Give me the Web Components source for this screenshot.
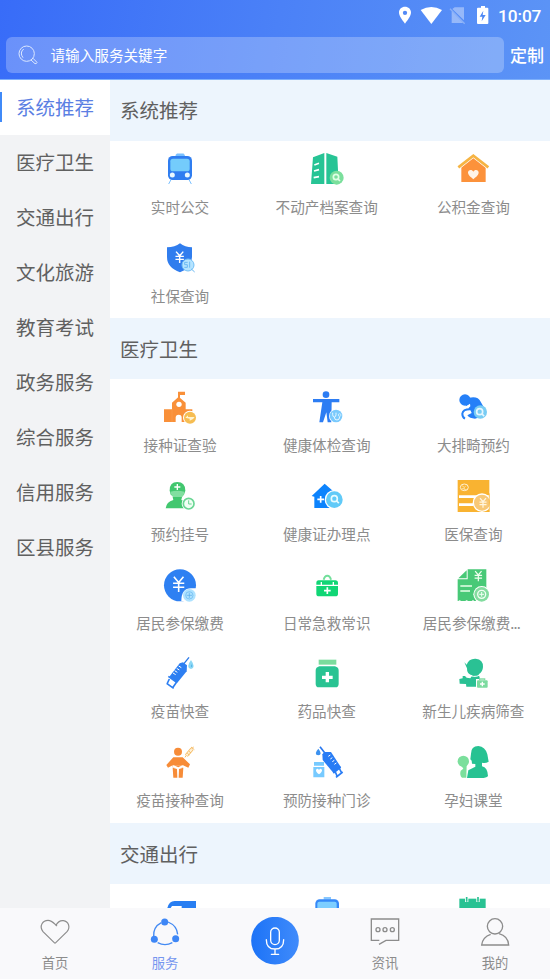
<!DOCTYPE html>
<html lang="zh-CN">
<head>
<meta charset="utf-8">
<title>服务</title>
<style>
html,body{margin:0;height:100%}
body{font-family:"Noto Sans CJK SC","Noto Sans",sans-serif;background:#fff;overflow:hidden}
</style>
</head>
<body>
<service-app></service-app>
<script>
const yen = (x, y, s, c, w = 2) => `<path transform="translate(${x} ${y}) scale(${s})" d="M-6-9 0-2 6-9M0-2V10M-7-1H7M-7 4H7" fill="none" stroke="${c}" stroke-width="${w}"/>`;
const mag = (x, y, r, c, w) => `<circle cx="${x}" cy="${y}" r="${r}" fill="none" stroke="${c}" stroke-width="${w}"/><path d="M${x + r * .7} ${y + r * .7}l${r * .8} ${r * .8}" stroke="${c}" stroke-width="${w}"/>`;
const ICONS = {
  train: ['162 39 96 96', `<path d="M201 42h19q3 0 3 6h-25q0-6 3-6zM183 119l-7 13M237 119l7 13" fill="#79c0ff" stroke="#79c0ff" stroke-width="3"/><rect x="174" y="48" width="72" height="72" rx="14" fill="#2f7df0"/><rect x="181" y="56" width="58" height="38" rx="8" fill="#74ccfb"/><circle cx="187" cy="105" r="7.5" fill="#e9f8ff"/><circle cx="232" cy="105" r="7.5" fill="#e9f8ff"/>`],
  building: ['602 39 96 96', `<path d="M608 52 642 39V132H602ZM648 39 681 50 685 132H648Z" fill="#27c495"/><path d="M612 75l14-5M611 93l15-4M610 113l16-3" stroke="#fff" stroke-width="5"/><circle cx="679" cy="113" r="21" fill="#7bdf9c"/>${mag(677, 111, 8, '#e0ffe5', 5)}`],
  house: ['382 39 96 96', `<path d="M395 81 431 52 468 81V126H395Z" fill="#fc923b"/><path d="M386 82 431 47 476 82" fill="none" stroke="#fff" stroke-width="12"/><path d="M386 82 431 47 476 82" fill="none" stroke="#f6b443" stroke-width="8"/><path d="M431 118C425 112 416 107 415 99c-1-10 12-12 16-4 4-8 17-6 16 4-1 8-10 13-16 19z" fill="#fff4e7"/>`],
  shield: ['162 305 96 96', `<path d="M210 309Q225 321 246 321V350Q246 382 210 396Q171 382 171 350V321Q195 321 210 309Z" fill="#307dee"/>${yen(209, 350, 1.8, '#fff', 2.4)}<circle cx="234" cy="374" r="18" fill="#b5e4ff" stroke="#74c0f6" stroke-width="3"/><path d="M244 386l10 9M233 366h-9v7h8v8h-9M239 364v18" fill="none" stroke="#6bb9f2" stroke-width="3"/>`],
  school: ['162 34 96 96', `<path d="M162 89H186V69L206 51 227 69V89H247V127H162ZM204 36H225V46H210V55H204Z" fill="#f99039"/><circle cx="207" cy="74" r="8" fill="#fff"/><path d="M197 128v-14q0-9 9-9t9 9v14z" fill="#fff"/><path d="M186 88v39" stroke="#ffab63"/><circle cx="240" cy="114" r="21" fill="#fff"/><circle cx="240" cy="114" r="18" fill="#f6bd52"/><path d="M226 114l8-7v5h20q-4 9-15 11v-6z" fill="#fff3d0"/>`],
  exam: ['602 34 96 96', `<circle cx="647" cy="45" r="10" fill="#2d7df3"/><path d="M608 58H687V68H664L663 128H652L648 98 638 128H627L636 68H608Z" fill="#2d7df3"/><circle cx="677" cy="109" r="21" fill="#fff"/><circle cx="677" cy="109" r="19" fill="#7acafd"/><path d="M667 99v6q0 7 5 7t5-7v-6M672 112q0 9 8 9t8-10" fill="none" stroke="#e6f7ff" stroke-width="3"/><circle cx="688" cy="106" r="4" fill="none" stroke="#e6f7ff" stroke-width="2"/>`],
  fetus: ['382 34 96 96', `<circle cx="406" cy="61" r="17" fill="#2580f8"/><path d="M417 55Q444 48 453 66L462 82 458 110 436 117Q420 117 413 107L426 100 422 91 416 86 422 80 421 72 408 80Z" fill="#2580f8"/><path d="M424 89Q400 88 398 102 398 113 406 117" stroke="#2580f8" stroke-width="6" fill="none"/><circle cx="452" cy="97" r="20" fill="#78ccf4"/>${mag(450, 96, 9, '#e6f7ff', 5)}`],
  nurse: ['162 300 96 96', `<path d="M179 332Q178 306 202 306T226 332L222 344Q202 360 182 344Z" fill="#42c76f"/><path d="M181 335Q202 329 223 335Q222 355 202 356 184 353 181 335Z" fill="#82dfa0"/><path d="M167 385Q169 366 190 360L188 351H216L214 360Q238 365 238 385Z" fill="#42c76f"/><path d="M202 312v18M193 321h18" stroke="#fff" stroke-width="4"/><circle cx="236" cy="371" r="21" fill="#fff"/><circle cx="236" cy="371" r="16" fill="#f1fff4" stroke="#6bd695" stroke-width="5"/><path d="M236 361v11h9" fill="none" stroke="#6bd695" stroke-width="3"/>`],
  clinic: ['602 300 96 96', `<path d="M604 348 643 311 668 333 691 352 680 357 676 384H612V350Z" fill="#0c83fd"/><path d="M631 348v20M621 358h20" stroke="#fff" stroke-width="5"/><circle cx="672" cy="359" r="29" fill="#fff"/><circle cx="672" cy="359" r="25" fill="#61caf8"/>${mag(672, 356, 9, '#e6fbff', 5)}`],
  card: ['382 300 96 96', `<path d="M384 300H479V396H384Z" fill="#f9b331"/><ellipse cx="404" cy="322" rx="12" ry="10" fill="none" stroke="#fff0d0" stroke-width="3"/><path d="M397 317l7 5 5-5M404 322v7h7M396 326h7" fill="none" stroke="#fff0d0" stroke-width="2"/><path d="M388 350H479M388 374H431" stroke="#fff" stroke-width="8"/><circle cx="457" cy="368" r="28" fill="#fff"/><circle cx="457" cy="368" r="24" fill="#f8c877"/><path d="M479 340v56" stroke="#f9b331" stroke-width="2"/>${yen(460, 368, 1.5, '#fff6e0', 2.5)}`],
  pay: ['162 56 96 96', `<circle cx="210" cy="105" r="48" fill="#2e80f2"/>${yen(206, 101, 2.4, '#fff', 2)}<path d="M214 153q0-39 29-39h17v39z" fill="#fff"/><circle cx="238" cy="135" r="19" fill="#aee2ff"/><circle cx="238" cy="135" r="11" fill="none" stroke="#63b5ef" stroke-width="2"/><path d="M238 127v16M230 135h16" stroke="#56abe9" stroke-width="2"/>`],
  kit: ['602 56 96 96', `<path d="M640 88Q643 76 651 76T662 88" fill="none" stroke="#72df9b" stroke-width="6"/><path d="M618 103V98Q618 90 625 90H675Q683 90 683 98V103ZM618 107H683V131Q683 138 675 138H626Q618 138 618 131Z" fill="#10d675"/><path d="M633 95v9M669 95v9" stroke="#fff" stroke-width="4"/><path d="M651 111v20M641 121h20" stroke="#fff" stroke-width="5"/>`],
  bill: ['382 56 96 96', `<path d="M414 57H470V152H384V87H414Z" fill="#48c977"/><path d="M386 84 411 60V84Z" fill="#48c977"/>${yen(446, 77, 1.6, '#efffee', 2.3)}<path d="M392 107h35M392 122h29" stroke="#e6ffe9" stroke-width="4"/><path d="M385 154q5-8 10 0m11 0q5-8 10 0m9 0q5-8 10 0" fill="#fff"/><circle cx="456" cy="132" r="25" fill="#fff"/><circle cx="456" cy="132" r="22" fill="#83dc9f"/><circle cx="456" cy="132" r="12" fill="none" stroke="#f0fff2" stroke-width="4"/><path d="M456 125v14M449 132h14" stroke="#f0fff2" stroke-width="3"/>`],
  syringe: ['162 322 96 96', `<path d="M220 344 237 323" stroke="#2878e9" stroke-width="4"/><path d="M209 341 219 338 231 347 230 365 202 399 178 381Z" fill="#2d7ff2"/><path d="M206 349l8 5M200 356l8 5M194 363l8 5M189 370l8 5" stroke="#fff" stroke-width="3"/><path d="M175 380l26 19M170 401l21 15M178 388l-7 15M200 397l-12 17" stroke="#2d7ff2" stroke-width="5" fill="none"/><path d="M243 331Q226 354 243 358 259 354 243 331Z" fill="#8ad7f5"/><path d="M245 345v7" stroke="#4fb0e6" stroke-width="3"/>`],
  medicine: ['602 322 96 96', `<path d="M625 330H678V345H625Z" fill="#7bdc9d"/><path d="M627 350H674Q685 353 685 363V402Q685 413 675 413H626Q616 413 616 402V363Q616 353 627 350Z" fill="#29c392"/><path d="M651 367v31M635 383h32" stroke="#fff" stroke-width="10"/>`],
  newborn: ['382 322 96 96', `<path d="M404 338 411 345Q417 326 438 327 461 329 460 352 459 368 447 374L451 387V411H410L409 403 390 402 389 388 399 386 399 379 406 379 411 384 422 386 428 377Q411 374 412 356Z" fill="#2ac194"/><path d="M414 373Q432 386 451 376" stroke="#fff" stroke-width="3" fill="none"/><path d="M439 388H476V416H439Z" fill="#fff"/><path d="M450 392v-4h15v4" fill="none" stroke="#85dda7" stroke-width="4"/><rect x="442" y="392" width="32" height="22" rx="3" fill="#7ddba0"/><path d="M458 396v14M451 403h14" stroke="#fff" stroke-width="4"/>`],
  child: ['162 48 96 96', `<circle cx="204" cy="65" r="12" fill="#f78c38"/><path d="M190 82H218L240 103 235 113 219 106V112H188V106L174 113 169 105ZM188 113L201 117 202 143H190ZM220 113L207 117 206 143H218Z" fill="#f78c38"/><path d="M188 110Q204 119 220 110L219 106H189Z" fill="#fff"/><path d="M191 106H217L205 112Z" fill="#f78c38"/><path d="M229 77 246 57" stroke="#f5ba62" stroke-width="11"/><path d="M229 77 246 57" stroke="#fff2d8" stroke-width="6"/><path d="M232 70l6 5M237 64l6 5M225 82l4-6M245 56l6-5M243 51l10 8" stroke="#f5ba62" stroke-width="3"/>`],
  vaccine: ['602 48 96 96', `<path d="M624 56Q608 74 624 76 638 73 624 56Z" fill="#3b91ef"/><path d="M629 50 643 68" stroke="#2877ef" stroke-width="5"/><path d="M636 73 642 66 662 66 692 112 670 130 637 90Z" fill="#287cf5"/><path d="M654 79l6-4M660 87l6-4M666 95l6-4M672 103l6-4" stroke="#fff" stroke-width="3"/><path d="M669 129 691 111M677 142 697 126M675 126l6 14M687 115l7 14" stroke="#287cf5" stroke-width="5"/><path d="M611 96H641V107H611ZM609 111H642V142H609Z" fill="#77caff"/><path d="M626 133q-10-7-9-13 4-7 9 0 5-7 9 0 1 6-9 13z" fill="#fff"/>`],
  mother: ['382 48 96 96', `<circle cx="401" cy="94" r="17" fill="#7bdf9c"/><path d="M394 106H411L410 143H397Q389 136 393 122L401 116Z" fill="#7bdf9c"/><path d="M422 88 424 71Q424 48 446 48 467 50 473 73L477 95Q467 101 457 98V109Q474 113 475 138 470 144 455 144H412L416 121 437 110V102L427 101 426 92Z" fill="#27c292"/>`],
  car: ['492 18 96 96', `<path d="M502 54Q507 33 524 33H588V54H545V48H516L512 54Z" fill="#287ef2"/>`],
  bus: ['107 21 96 96', `<path d="M145 24H167V32H145Z" fill="#87c7ff"/><rect x="120" y="31" width="71" height="70" rx="13" fill="#3488f8"/><rect x="126" y="38" width="58" height="38" rx="6" fill="#7dceff"/>`],
  calendar: ['547 21 96 96', `<path d="M554 29H633V106H554Z" fill="#29c293"/><path d="M576 24v15M610 24v15" stroke="#fff" stroke-width="10"/><path d="M576 24v14M610 24v14" stroke="#29c293" stroke-width="5"/>`]
};
const define = (name, html) => customElements.define(name, class extends HTMLElement {
  connectedCallback() {
    if (this.shadowRoot) return;
    this.attachShadow({ mode: 'open' }).innerHTML = typeof html === 'function' ? html(this) : html;
  }
});

define('status-bar', `<style>:host{display:flex;height:32px;align-items:center;justify-content:flex-end;box-sizing:border-box;padding-right:9px;color:#fff;font:500 17.3px/32px Roboto,sans-serif}svg{display:block;width:100px;height:32px}span{display:block;width:43px;white-space:nowrap;letter-spacing:-.1px}</style>
<svg viewBox="0 0 300 96"><path d="M84 20c-10 0-18 7-18 17 0 11 9 22 18 34 9-12 18-23 18-34 0-10-8-17-18-17zm0 12a6 6 0 1 1 0 13 6 6 0 0 1 0-13z" fill="#fff" fill-rule="evenodd"/><path d="M131 30Q163 12 195 30L163 72Z" fill="#fff"/><path d="M233 22H261V61L226 27ZM224 34L258 69H224Z" fill="#fff" opacity=".38"/><path d="M219 26 263 71" stroke="#bcd3fa" stroke-width="4" opacity=".5"/></svg>
<svg style="width:21px" viewBox="0 0 63 96"><path d="M8 23H12V18H24V23H31Q34 23 34 26V69Q34 72 31 72H3Q0 72 0 69V26Q0 23 3 23Z" fill="#fff"/><path d="M19 32 8 50h8l-2 14 12-19h-9z" fill="#4d88f5"/></svg>
<span>10:07</span>`);

define('search-bar', `<style>:host{display:flex;height:48px;align-items:flex-start;padding:5px 0 0 6px;box-sizing:border-box;color:#fff}.box{display:flex;align-items:center;width:498px;height:36px;border-radius:6px;background:rgba(255,255,255,.25);font-size:14.6px;line-height:36px}svg{width:22px;height:22px;margin:0 11.5px 0 11px}.box span{display:block}b{font-size:17px;font-weight:500;line-height:36px;margin-left:6px;white-space:nowrap}</style>
<div class="box"><svg viewBox="0 0 66 66" fill="none" stroke="#dce8ff" stroke-width="3"><circle cx="29" cy="29" r="23"/><path d="M18 41Q7 26 20 15M45 46l3-3 12 12q-1 5-6 4L42 48"/></svg><span>请输入服务关键字</span></div><b>定制</b>`);

define('app-header', `<style>:host{display:block;height:80px;box-sizing:border-box;background:linear-gradient(100deg,#386cf8,#4b81f7 50%,#5c94f6);border-bottom:1px solid #7eb0fb}</style><status-bar></status-bar><search-bar></search-bar>`);

define('side-item', `<style>:host{display:flex;height:55px;box-sizing:border-box;align-items:center;padding:0 0 1px 16px;position:relative;font-size:19.5px;line-height:30px;color:#606060;white-space:nowrap}:host([active]){padding-bottom:2px;background:#fff;color:#5b7fe3}:host([active])::before{content:"";position:absolute;left:0;top:12px;width:2px;height:30px;background:#408af8}</style><slot></slot>`);
define('side-nav', `<style>:host{display:block;width:110px;flex:none;background:#f2f3f5}</style><slot></slot>`);

define('service-item', el => {
  const [box, art] = ICONS[el.getAttribute('icon')];
  return `<style>:host{display:flex;flex-direction:column;align-items:center;height:88.67px;padding-top:12px;box-sizing:border-box;min-width:0}svg{display:block;width:32px;height:32px;flex:none;overflow:visible}span{display:block;margin-top:11px;font-size:14.6px;line-height:22px;color:#8c8c8c;white-space:nowrap}</style><svg viewBox="${box}">${art}</svg><span><slot></slot></span>`;
});
define('service-section', el => `<style>:host{display:block}h2{margin:0;height:61px;padding-left:10px;background:#edf5fd;font-size:19.5px;font-weight:400;line-height:61px;color:#606060}:host(:first-child) h2{line-height:60px}.grid{display:grid;grid-template-columns:repeat(3,1fr);margin:0 3.3px 0 -3.3px}</style><h2>${el.getAttribute('heading')}</h2><div class="grid"><slot></slot></div>`);

define('tab-item', `<style>:host{display:flex;flex:1;flex-direction:column;align-items:center;color:#8c8c8c;font-size:13.3px;line-height:20px}:host([active]){color:#7596ef}::slotted(svg){display:block;width:32px;height:32px;margin:8px 0 5px}</style><slot name="icon"></slot><slot></slot>`);
define('voice-button', `<style>:host{display:flex;flex:1;justify-content:center}svg{width:48px;height:48px;margin-top:9px}</style><svg viewBox="0 0 144 144"><defs><linearGradient id="g" x1="0" x2="1"><stop stop-color="#1c73f7"/><stop offset="1" stop-color="#408bfb"/></linearGradient></defs><circle cx="72" cy="71" r="71.5" fill="url(#g)"/><g fill="none" stroke="#fff" stroke-width="4" stroke-linecap="round"><rect x="59" y="33" width="26" height="50" rx="13"/><path d="M46 68Q46 96 72 96T98 68M72 96V112M61 112H83"/></g></svg>`);
define('tab-bar', `<style>:host{display:flex;height:71px;flex:none;background:#f9f9fb}</style>
<tab-item><svg slot="icon" viewBox="0 0 96 96" fill="none" stroke="#8c8c8c" stroke-width="3.5"><path d="M48 82 12 47C-1 29 12 13 27 13 39 13 45 22 54 30M50 29C56 18 64 13 73 14 89 16 95 34 84 47L48 82"/></svg>首页</tab-item>
<tab-item active><svg slot="icon" viewBox="0 0 96 96"><path d="M37 20Q12 33 14 62M26 80Q48 92 70 80M57 18Q84 29 86 55" fill="none" stroke="#438af3" stroke-width="4"/><g fill="#3e87f6"><circle cx="47" cy="18" r="10.5"/><circle cx="16" cy="70" r="10.5"/><circle cx="80" cy="68" r="10.5"/></g></svg>服务</tab-item>
<voice-button></voice-button>
<tab-item><svg slot="icon" viewBox="0 0 96 96" fill="none" stroke="#8c8c8c" stroke-width="4"><path d="M31 73H7V9H89V73H51L30 85"/><circle cx="27" cy="41" r="6"/><circle cx="48" cy="41" r="6"/><circle cx="70" cy="41" r="6"/></svg>资讯</tab-item>
<tab-item><svg slot="icon" viewBox="0 0 96 96" fill="none" stroke="#8c8c8c" stroke-width="4"><circle cx="48" cy="31" r="23"/><path d="M35 55Q11 63 8 87H89Q87 60 60 53"/></svg>我的</tab-item>`);

const side = ['系统推荐', '医疗卫生', '交通出行', '文化旅游', '教育考试', '政务服务', '综合服务', '信用服务', '区县服务'];
const sections = [
  ['系统推荐', [['train', '实时公交'], ['building', '不动产档案查询'], ['house', '公积金查询'], ['shield', '社保查询']]],
  ['医疗卫生', [['school', '接种证查验'], ['exam', '健康体检查询'], ['fetus', '大排畸预约'], ['nurse', '预约挂号'], ['clinic', '健康证办理点'], ['card', '医保查询'], ['pay', '居民参保缴费'], ['kit', '日常急救常识'], ['bill', '居民参保缴费<i style="font-style:normal;letter-spacing:-.8px;margin-right:4px">...</i>'], ['syringe', '疫苗快查'], ['medicine', '药品快查'], ['newborn', '新生儿疾病筛查'], ['child', '疫苗接种查询'], ['vaccine', '预防接种门诊'], ['mother', '孕妇课堂']]],
  ['交通出行', [['car', ''], ['bus', ''], ['calendar', '']]]
];
define('service-app', `<style>:host{display:flex;flex-direction:column;width:550px;height:979px;overflow:hidden}main{display:flex;flex:1;min-height:0;overflow:hidden}.content{flex:1;min-width:0;overflow:hidden;background:#fff}</style>
<app-header></app-header>
<main><side-nav>${side.map((t, i) => `<side-item${i ? '' : ' active'}>${t}</side-item>`).join('')}</side-nav>
<div class="content">${sections.map(([h, items]) => `<service-section heading="${h}">${items.map(([i, t]) => `<service-item icon="${i}">${t}</service-item>`).join('')}</service-section>`).join('')}</div></main>
<tab-bar></tab-bar>`);
</script>
</body>
</html>
